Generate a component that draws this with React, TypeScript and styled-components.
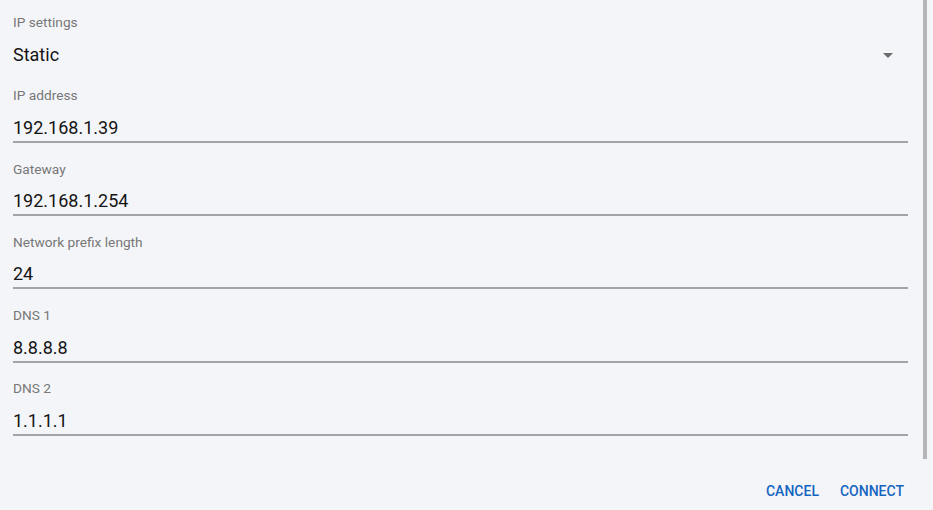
import styled, { createGlobalStyle } from 'styled-components'

const GlobalStyle = createGlobalStyle`
  html, body {
    margin: 0;
    padding: 0;
    background: #f4f5f9;
    font-family: Roboto, "Liberation Sans", sans-serif;
  }
`

const fields = [
  { label: 'IP address', value: '192.168.1.39' },
  { label: 'Gateway', value: '192.168.1.254' },
  { label: 'Network prefix length', value: '24' },
  { label: 'DNS 1', value: '8.8.8.8' },
  { label: 'DNS 2', value: '1.1.1.1' },
]

function App() {
  return (
    <>
      <GlobalStyle />
      <Page>
        <Form>
          <Field>
            <Label>IP settings</Label>
            <Value $select>
              <ValueText>Static</ValueText>
              <svg width="24" height="24" viewBox="0 0 24 24">
                <path d="M7 10l5 5 5-5z" fill="#6b6b6b" />
              </svg>
            </Value>
          </Field>
          {fields.map((f) => (
            <Field key={f.label}>
              <Label>{f.label}</Label>
              <Value>
                <ValueText>{f.value}</ValueText>
              </Value>
            </Field>
          ))}
        </Form>
        <Actions>
          <TextButton>Cancel</TextButton>
          <TextButton>Connect</TextButton>
        </Actions>
        <Scrollbar />
      </Page>
    </>
  )
}

const Page = styled.div`
  position: relative;
  width: 933px;
  height: 510px;
  overflow: hidden;
  background: #f4f5f9;
  box-sizing: border-box;
`
const Form = styled.div`
  display: flex;
  flex-direction: column;
  padding: 14px 25px 0 13px;
`
const Field = styled.div`
  display: flex;
  flex-direction: column;
  margin-bottom: 17.8px;
`
const Label = styled.label`
  font-size: 13.7px;
  line-height: 16px;
  color: #777777;
`
const Value = styled.div<{ $select?: boolean }>`
  display: flex;
  align-items: center;
  justify-content: space-between;
  margin-top: 12.5px;
  height: 24px;
  padding-bottom: 1px;
  padding-right: ${(p) => (p.$select ? '8px' : '0')};
  border-bottom: 2px solid ${(p) => (p.$select ? 'transparent' : '#a3a3a5')};

  svg {
    display: block;
  }
`
const ValueText = styled.span`
  font-size: 18px;
  line-height: 24px;
  color: #141414;
`
const Actions = styled.div`
  display: flex;
  justify-content: flex-end;
  gap: 5px;
  padding: 19px 21px 0 0;
`
const TextButton = styled.button`
  border: none;
  background: none;
  font-family: Roboto, "Liberation Sans", sans-serif;
  font-weight: 500;
  font-size: 14px;
  text-transform: uppercase;
  color: #1565c0;
  height: 36px;
  padding: 0 8px;
  cursor: pointer;
`
const Scrollbar = styled.div`
  position: absolute;
  top: 0;
  left: 923px;
  width: 4px;
  height: 459px;
  background: #b5b5b8;
`

export default App
